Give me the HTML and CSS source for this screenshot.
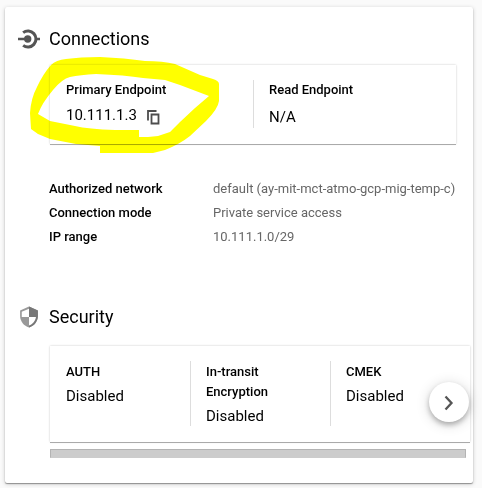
FILE: index.html
```html
<!DOCTYPE html>
<html lang="en">
<head>
<meta charset="utf-8">
<title>Instance details</title>
<link rel="stylesheet" href="styles.css">
</head>
<body>
<main class="card">
  <section class="connections">
    <header class="heading">
      <svg class="heading-icon" viewBox="0 0 24 24"><path d="M0 12h8M19 12h5" stroke="#555" stroke-width="2.9"/><circle cx="10.600" cy="12" r="4" fill="#555"/><path d="M5.600 5.100A8.700 8.700 0 1 1 5.600 18.900" fill="none" stroke="#555" stroke-width="3.300"/></svg>
      <h2>Connections</h2>
    </header>
    <div class="panel endpoints">
      <div class="cell"><h3>Primary Endpoint</h3><p class="address">10.111.1.3
        <svg class="copy" viewBox="0 0 13 15"><path d="M1 10.5V1H9.5M4.5 4.5H11.5V13.5H4.5Z" fill="none" stroke="#4d4d4d" stroke-width="1.8"/></svg></p></div>
      <div class="cell"><h3>Read Endpoint</h3><p>N/A</p></div>
    </div>
    <dl class="details">
      <dt>Authorized network</dt><dd>default (ay-mit-mct-atmo-gcp-mig-temp-c)</dd>
      <dt>Connection mode</dt><dd>Private service access</dd>
      <dt>IP range</dt><dd>10.111.1.0/29</dd>
    </dl>
  </section>
  <section class="security">
    <header class="heading">
      <svg class="heading-icon" viewBox="0 0 24 24"><path d="M12 .5 2.300 4.800v6.200c0 5.800 4.200 11 9.700 12.500 5.500-1.500 9.700-6.700 9.700-12.500V4.800Z" fill="#999"/><path d="M12 .5 21.700 4.800V11c0 5.800-4.200 11-9.700 12.500Z" fill="#777"/><path d="M12 2.900 4.100 6.200V12H12ZM12 12h7.600c-.6 4.200-3.500 7.900-7.600 9.200Z" fill="#fff"/></svg>
      <h2>Security</h2>
    </header>
    <div class="panel policies">
      <div class="cell"><h3>AUTH</h3><p>Disabled</p></div>
      <div class="cell"><h3>In-transit Encryption</h3><p>Disabled</p></div>
      <div class="cell"><h3>CMEK</h3><p>Disabled</p></div>
      <button class="next" aria-label="Next"><svg viewBox="0 0 10 16"><path d="M1.500 1.500 7.500 8 1.500 14.500" fill="none" stroke="#555" stroke-width="2.300"/></svg></button>
    </div>
    <div class="scrollbar"></div>
  </section>
</main>
<svg class="marker" viewBox="0 0 482 488"><path fill="#ff0" fill-rule="evenodd" d="M51 65Q56 60 66 59Q80 57 100 57Q125 58 145 61Q163 61 175 64L200 75L213 79Q219 81 219 84V101Q218 109 206 121L190 136Q180 144 165 150L153 153H100V146L76 144L50 139L38 134L31 129L30 113Q31 98 37 87Q43 74 51 65ZM38 114Q42 103 53 90Q62 79 70 77Q80 75 96 74Q125 75 143 78L165 80L180 85L209 96L195 108L180 122L170 132L158 136L148 137H139V130H115Q88 129 75 126L50 121Z"/></svg>
</body>
</html>
```

FILE: styles.css
```css
* { box-sizing: border-box; }
body {
  margin: 0;
  padding: 7px 9px 5px 5px;
  height: 488px;
  overflow: hidden;
  background: #fafafa;
  color: #000;
  font-family: Roboto, sans-serif;
}
h2, h3, p, dl, dd { margin: 0; }
.card {
  height: 476px;
  padding: 20px 3px 0 13px;
  background: #fff;
  border-radius: 2px;
  box-shadow: 0 1px 1px rgba(0,0,0,.35), 0 1px 4px rgba(0,0,0,.2);
}
.heading { display: flex; align-items: center; height: 24px; gap: 9px; }
.heading-icon { width: 22px; height: 22px; }
h2 { font-size: 18px; line-height: 24px; font-weight: 400; }
h3 { font-size: 13px; line-height: 20px; font-weight: 500; }
.panel {
  position: relative;
  display: flex;
  margin: 14px 0 0 32px;
  background: #fff;
  box-shadow: 0 1px 0 #aaa, 0 0 2px rgba(0,0,0,.22);
}
.endpoints { width: 406px; height: 79px; padding: 15px 0 16px; }
.cell { padding-left: 16px; }
.cell + .cell { border-left: 1px solid #ddd; padding-left: 15px; }
.cell p { font-size: 15px; line-height: 24px; }
.endpoints .cell:first-child { width: 203px; }
.endpoints .cell + .cell p { margin-top: 5px; }
.endpoints .address { display: flex; align-items: center; margin-top: 3px; gap: 10px; }
.copy { width: 13px; height: 15px; margin-top: 4px; }
.details {
  display: grid;
  grid-template-columns: 164px 1fr;
  margin: 33px 0 0 31px;
  font-size: 13px;
  line-height: 24px;
}
dt { font-weight: 500; }
dd { color: #666; white-space: nowrap; }
.security { margin-top: 56px; }
.policies { width: 420px; height: 96px; margin-top: 17px; padding: 15px 0 16px; }
.policies .cell { width: 140px; padding-right: 16px; }
.policies .cell h3 { padding-top: 1px; }
.policies .cell p { margin-top: 2px; }
.next {
  position: absolute;
  right: 1px;
  top: 36px;
  display: flex;
  align-items: center;
  justify-content: center;
  width: 40px;
  height: 40px;
  padding: 0;
  border: 0;
  border-radius: 50%;
  background: #fff;
  box-shadow: 0 3px 5px rgba(0,0,0,.25), 0 2px 14px rgba(0,0,0,.16);
}
.next svg { width: 10px; height: 16px; margin-top: 2px; }
.scrollbar {
  width: 416px;
  height: 9px;
  margin: 7px 0 0 32px;
  background: #ccc;
  border: 1px solid #b3b3b3;
  border-bottom-color: #ccc;
}
.marker {
  position: absolute;
  left: 0;
  top: 0;
  width: 482px;
  height: 488px;
  pointer-events: none;
  mix-blend-mode: multiply;
}
```
